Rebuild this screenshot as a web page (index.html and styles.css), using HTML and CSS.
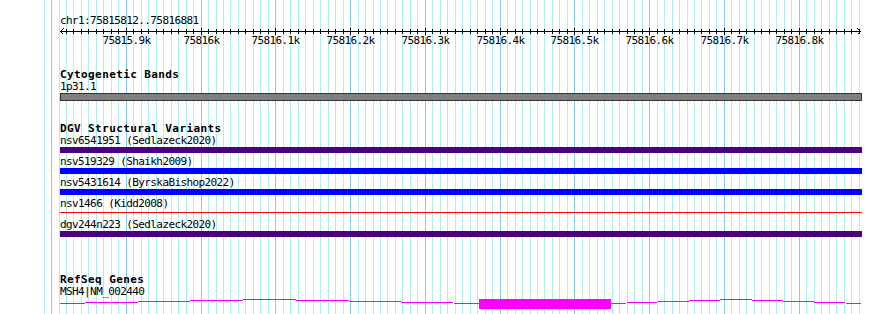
FILE: index.html
```html
<!DOCTYPE html>
<html>
  <head>
    <title>chr1:75815812..75816881</title>
    <meta charset="utf-8">
    <link rel="stylesheet" href="styles.css">
  </head>
  <body>
    <main class="panel">
      <svg class="grid" id="grid" width="890" height="314"></svg>

      <div class="ruler">
        <div class="chrom">chr1:75815812..75816881</div>
        <svg class="scale" id="scale" width="802" height="19">
          <rect class="axis" x="0" y="4" width="801" height="1"/>
          <polyline class="arrow" points="3.5,1.5 0.5,4.5 3.5,7.5"/>
          <polyline class="arrow" points="797.5,1.5 800.5,4.5 797.5,7.5"/>
        </svg>
      </div>

      <section class="track cyto">
        <h2>Cytogenetic Bands</h2>
        <div class="label">1p31.1</div>
        <div class="band"></div>
      </section>

      <section class="track dgv">
        <h2>DGV Structural Variants</h2>
        <div class="variant">
          <div class="label">nsv6541951 (Sedlazeck2020)</div>
          <div class="bar indigo"></div>
        </div>
        <div class="variant">
          <div class="label">nsv519329 (Shaikh2009)</div>
          <div class="bar blue"></div>
        </div>
        <div class="variant">
          <div class="label">nsv5431614 (ByrskaBishop2022)</div>
          <div class="bar blue"></div>
        </div>
        <div class="variant">
          <div class="label">nsv1466 (Kidd2008)</div>
          <div class="bar thin"></div>
        </div>
        <div class="variant">
          <div class="label">dgv244n223 (Sedlazeck2020)</div>
          <div class="bar indigo"></div>
        </div>
      </section>

      <section class="track refseq">
        <h2>RefSeq Genes</h2>
        <div class="label">MSH4|NM_002440</div>
        <svg class="gene" width="802" height="12">
          <polyline class="intron" points="0,5.5 209.5,1.5 419,5.5"/>
          <rect class="exon" x="419" y="1" width="132" height="10"/>
          <polyline class="intron" points="551,5.5 676,1.5 801,5.5"/>
        </svg>
      </section>
    </main>

    <script>
      var start = 75815812
      var end = 75816881
      var scale = 800 / (end - start + 1)
      var ns = 'http://www.w3.org/2000/svg'

      function px (bp) {
        return Math.round(60 + (bp - start) * scale)
      }

      function add (svg, tag, attrs, text) {
        var el = document.createElementNS(ns, tag)
        for (var key in attrs) {
          el.setAttribute(key, attrs[key])
        }
        if (text) el.textContent = text
        svg.appendChild(el)
      }

      var grid = document.getElementById('grid')
      var ruler = document.getElementById('scale')

      for (var bp = 75815790; bp <= 75816880; bp += 10) {
        var major = bp % 100 === 0
        add(grid, 'rect', { x: px(bp), y: 0, width: 1, height: 314, 'class': major ? 'major' : 'minor' })
        if (bp <= start) continue
        var x = px(bp) - 60
        if (major) {
          add(ruler, 'rect', { x: x, y: 1, width: 1, height: 7, 'class': 'tick' })
          var label = bp % 1000 === 0 ? (bp / 1000) + 'k' : (bp / 1000).toFixed(1) + 'k'
          add(ruler, 'text', { x: x + 0.5, y: 17, 'class': 'tick-label' }, label)
        } else {
          add(ruler, 'rect', { x: x, y: 2, width: 1, height: 5, 'class': 'tick' })
        }
      }
    </script>
  </body>
</html>
```

FILE: styles.css
```css
body {
  margin: 0;
  background: #fff;
  color: #000;
  font-family: "DejaVu Sans Mono", monospace;
  font-size: 11px;
  letter-spacing: -0.6px;
}
.panel {
  position: relative;
  width: 890px;
  height: 314px;
  overflow: hidden;
  box-sizing: border-box;
  padding: 15px 0 0 60px;
}
.grid {
  position: absolute;
  left: 0;
  top: 0;
  shape-rendering: crispEdges;
}
.minor {
  fill: #afeeee;
}
.major {
  fill: #87ceeb;
}
.ruler, .track {
  position: relative;
}
.chrom {
  line-height: 12px;
  height: 12px;
  white-space: nowrap;
}
.scale {
  display: block;
  overflow: visible;
  shape-rendering: crispEdges;
}
.axis, .tick {
  fill: #000;
}
.arrow {
  fill: none;
  stroke: #000;
  stroke-width: 1;
}
.tick-label {
  font-family: "DejaVu Sans Mono", monospace;
  font-size: 11px;
  text-anchor: middle;
  fill: #000;
}
.track h2 {
  margin: 0;
  font-size: 11px;
  font-weight: bold;
  letter-spacing: 0.4px;
  line-height: 13px;
  height: 13px;
  white-space: nowrap;
}
.label {
  line-height: 12px;
  height: 12px;
  white-space: nowrap;
}
.cyto {
  margin-top: 22px;
}
.band {
  width: 802px;
  height: 8px;
  box-sizing: border-box;
  border: 1px solid #333;
  background: #808080;
}
.dgv {
  margin-top: 21px;
}
.variant {
  padding-bottom: 3px;
}
.bar {
  width: 802px;
  height: 6px;
}
.indigo {
  background: #4b0082;
}
.blue {
  background: #0000ff;
}
.thin {
  background: linear-gradient(#ff0000, #ff0000) 0 2px / 100% 1px no-repeat;
}
.refseq {
  margin-top: 33px;
}
.gene {
  display: block;
  shape-rendering: crispEdges;
}
.intron {
  fill: none;
  stroke: #ff00ff;
  stroke-width: 1;
}
.exon {
  fill: #ff00ff;
}
```
